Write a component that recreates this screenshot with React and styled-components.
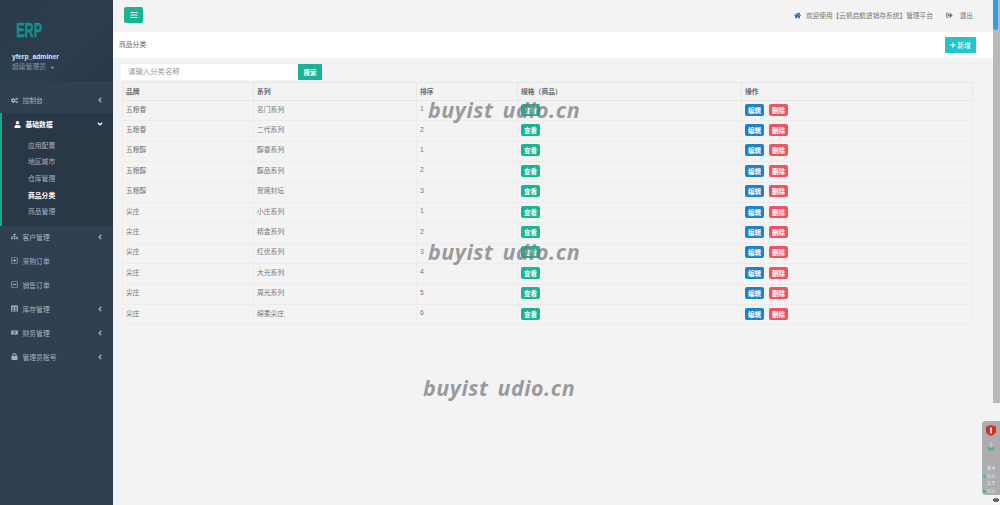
import React from 'react';
import styled, { createGlobalStyle } from 'styled-components';
import {
  FaBars, FaHome, FaSignOutAlt, FaPlus, FaCogs, FaUser, FaSitemap, FaRegPlusSquare,
  FaRegMinusSquare, FaTable, FaMoneyBillAlt, FaLock, FaAngleLeft, FaAngleDown, FaCaretDown, FaEye,
} from 'react-icons/fa';

const GlobalStyle = createGlobalStyle`
  html, body { margin: 0; padding: 0; height: 100%; overflow: hidden; background: #f3f3f4; }
  #root { height: 100%; }
  * { box-sizing: border-box; }
`;

const rows = [
  ['五粮春', '名门系列', 1],
  ['五粮春', '二代系列', 2],
  ['五粮醇', '醇香系列', 1],
  ['五粮醇', '醇品系列', 2],
  ['五粮醇', '贺席封坛', 3],
  ['尖庄', '小庄系列', 1],
  ['尖庄', '精金系列', 2],
  ['尖庄', '红优系列', 3],
  ['尖庄', '大光系列', 4],
  ['尖庄', '周光系列', 5],
  ['尖庄', '绵柔尖庄', 6],
];

const subMenu = ['应用配置', '地区城市', '仓库管理', '商品分类', '商品管理'];

const menuAfter = [
  { icon: <FaSitemap />, label: '客户管理', arrow: true },
  { icon: <FaRegPlusSquare />, label: '采购订单' },
  { icon: <FaRegMinusSquare />, label: '销售订单' },
  { icon: <FaTable />, label: '库存管理', arrow: true },
  { icon: <FaMoneyBillAlt />, label: '财务管理', arrow: true },
  { icon: <FaLock />, label: '管理员账号', arrow: true },
];

export default function App() {
  return (
    <Page>
      <GlobalStyle />
      <Sidebar>
        <Profile>
          <Logo>ERP</Logo>
          <UserName>yferp_adminer</UserName>
          <UserRole>超级管理员 <FaCaretDown size={7} /></UserRole>
        </Profile>
        <Menu>
          <MenuItem>
            <MenuIcon><FaCogs /></MenuIcon>
            <span>控制台</span>
            <MenuArrow><FaAngleLeft /></MenuArrow>
          </MenuItem>
          <ActiveGroup>
            <ActiveItem>
              <MenuIcon><FaUser /></MenuIcon>
              <span>基础数据</span>
              <MenuArrow><FaAngleDown /></MenuArrow>
            </ActiveItem>
            {subMenu.map((name) => (
              <SubItem key={name} $current={name === '商品分类'}>{name}</SubItem>
            ))}
          </ActiveGroup>
          {menuAfter.map((item) => (
            <MenuItem key={item.label}>
              <MenuIcon>{item.icon}</MenuIcon>
              <span>{item.label}</span>
              {item.arrow && <MenuArrow><FaAngleLeft /></MenuArrow>}
            </MenuItem>
          ))}
        </Menu>
      </Sidebar>

      <Main>
        <TopBar>
          <ToggleButton><FaBars /></ToggleButton>
          <TopRight>
            <HomeIcon><FaHome /></HomeIcon>
            <span>欢迎使用【云帆启航进销存系统】管理平台</span>
            <LogoutLink><FaSignOutAlt /> <span>退出</span></LogoutLink>
          </TopRight>
        </TopBar>

        <TitleBar>
          <TitleText>商品分类</TitleText>
          <AddButton><FaPlus size={6} /> 新增</AddButton>
        </TitleBar>

        <Content>
          <SearchRow>
            <SearchInput placeholder="请输入分类名称" />
            <SearchButton>搜索</SearchButton>
          </SearchRow>
          <Table>
            <colgroup>
              <col style={{ width: 131 }} />
              <col style={{ width: 163 }} />
              <col style={{ width: 101 }} />
              <col style={{ width: 224 }} />
              <col style={{ width: 231 }} />
            </colgroup>
            <thead>
              <tr>
                <Th>品牌</Th>
                <Th>系列</Th>
                <Th>排序</Th>
                <Th>规格（商品）</Th>
                <Th>操作</Th>
              </tr>
            </thead>
            <tbody>
              {rows.map((row) => (
                <tr key={row[1]}>
                  <Td>{row[0]}</Td>
                  <Td>{row[1]}</Td>
                  <Td>{row[2]}</Td>
                  <ButtonCell><SmallButton $color="#1ab394">查看</SmallButton></ButtonCell>
                  <ButtonCell>
                    <SmallButton $color="#1c84c6">编辑</SmallButton>
                    <SmallButton $color="#ed5565">删除</SmallButton>
                  </ButtonCell>
                </tr>
              ))}
            </tbody>
          </Table>
        </Content>
      </Main>

      <Watermark $x={428} $y={96}>buyist udio.cn</Watermark>
      <Watermark $x={428} $y={238}>buyist udio.cn</Watermark>
      <Watermark $x={423} $y={374}>buyist udio.cn</Watermark>

      <ScrollTrack><ScrollThumb /></ScrollTrack>

      <FloatWidget>
        <svg width="10" height="11" viewBox="0 0 10 11">
          <path d="M5 0 L10 1.500 V6 C10 8.500 7 10 5 11 C3 10 0 8.500 0 6 V1.500 Z" fill="#cf3029" />
          <rect x="4.200" y="2.500" width="1.600" height="6" fill="#fff" />
        </svg>
        <MicIcon width="8" height="10" viewBox="0 0 8 10">
          <rect x="2.500" y="0" width="3" height="5" rx="1.500" fill="#c2c2c4" />
          <path d="M0.500 5 A3.500 3.500 0 0 0 7.500 5 L5.500 5 A1.500 1.500 0 0 1 2.500 5 Z" fill="#4fae7b" />
        </MicIcon>
        <Speed>
          <span>8.4</span>
          <SpeedUnit $dot="#3b9fd1">K/s</SpeedUnit>
          <span>2.7</span>
          <SpeedUnit $dot="#2fae7a">K/s</SpeedUnit>
        </Speed>
      </FloatWidget>
      <EyeDot><FaEye /></EyeDot>
    </Page>
  );
}

const Page = styled.div`
  display: flex;
  height: 505px;
  width: 1000px;
  position: relative;
  overflow: hidden;
  font-family: "Liberation Sans", "Noto Sans CJK SC", sans-serif;
  font-size: 6.800px;
  color: #676a6c;
`;

const Sidebar = styled.nav`
  width: 113px;
  flex: none;
  background: #2f4050;
`;

const Profile = styled.div`
  height: 81px;
  padding: 19px 12px 0;
  background: linear-gradient(135deg, #2a3a49 0%, #2c3d4d 55%, #27374a 100%);
`;

const Logo = styled.div`
  font-size: 21px;
  line-height: 22px;
  height: 33px;
  padding-left: 7px;
  font-weight: 700;
  color: #14908f;
  -webkit-text-stroke: 0.6px #14908f;
  transform: scaleX(0.6);
  transform-origin: left top;
`;

const UserName = styled.div`
  font-size: 6.800px;
  line-height: 10px;
  font-weight: 700;
  color: #dfe4ed;
`;

const UserRole = styled.div`
  line-height: 10px;
  color: #8095a8;
  display: flex;
  align-items: center;
  gap: 3px;
`;

const Menu = styled.div`
  padding-top: 8px;
`;

const MenuItem = styled.div`
  height: 24px;
  display: flex;
  align-items: center;
  padding: 0 0 2px 11px;
  color: #a7b1c2;
`;

const MenuIcon = styled.span`
  margin-right: 4.500px;
  display: inline-flex;
  font-size: 7px;
`;

const MenuArrow = styled.span`
  margin-left: auto;
  margin-right: 9px;
  display: inline-flex;
  font-size: 8px;
`;

const ActiveGroup = styled.div`
  background: #293846;
  border-left: 2px solid #19aa8d;
  padding-bottom: 5px;
`;

const ActiveItem = styled(MenuItem)`
  height: 24.500px;
  padding-left: 12px;
  font-weight: 700;
  color: #fff;
`;

const SubItem = styled.div`
  height: 16.700px;
  line-height: 16.700px;
  padding-left: 26px;
  font-weight: ${(p) => (p.$current ? 700 : 400)};
  color: ${(p) => (p.$current ? '#ffffff' : '#a7b1c2')};
`;

const Main = styled.main`
  flex: 1;
  min-width: 0;
  display: flex;
  flex-direction: column;
`;

const TopBar = styled.header`
  height: 32px;
  flex: none;
  display: flex;
  align-items: center;
  justify-content: space-between;
  padding: 0 27px 2px 11px;
  background: #f3f3f4;
`;

const ToggleButton = styled.button`
  width: 19px;
  height: 16px;
  padding: 0;
  border: 0;
  border-radius: 2px;
  background: #1ab394;
  color: #fff;
  display: flex;
  align-items: center;
  justify-content: center;
  font-size: 8px;
`;

const TopRight = styled.div`
  display: flex;
  align-items: center;
  font-size: 6.700px;
  color: #777;
`;

const HomeIcon = styled.span`
  color: #2a5a8a;
  display: inline-flex;
  margin-right: 5px;
  font-size: 7px;
`;

const LogoutLink = styled.span`
  margin-left: 13px;
  display: inline-flex;
  align-items: center;
  gap: 7px;
`;

const TitleBar = styled.div`
  height: 26px;
  flex: none;
  background: #fff;
  margin-right: 7px;
  display: flex;
  align-items: center;
  justify-content: space-between;
  padding: 0 17px 0 6px;
  color: #666;
`;

const TitleText = styled.span`
  padding-bottom: 3px;
`;

const AddButton = styled.button`
  width: 31px;
  height: 16px;
  padding: 0;
  border: 0;
  border-radius: 1px;
  background: #23c6c8;
  color: #fff;
  font: inherit;
  display: flex;
  align-items: center;
  justify-content: center;
  gap: 1px;
`;

const Content = styled.div`
  flex: 1;
  padding: 6px 0 0 8px;
`;

const SearchRow = styled.div`
  display: flex;
  height: 16px;
  margin-bottom: 2px;
`;

const SearchInput = styled.input`
  width: 177px;
  height: 16px;
  border: 0;
  padding: 0 7px 2px;
  background: #fff;
  font: inherit;
  font-size: 7.400px;
  outline: none;

  &::placeholder {
    color: #999;
  }
`;

const SearchButton = styled.button`
  width: 24px;
  height: 16px;
  padding: 0;
  border: 0;
  background: #1ab394;
  color: #fff;
  font: inherit;
  font-size: 6.500px;
  font-weight: 700;
`;

const Table = styled.table`
  width: 850px;
  margin-left: 1px;
  table-layout: fixed;
  border-collapse: collapse;
  border: 1px solid #e7e7e7;
`;

const Th = styled.th`
  height: 18px;
  padding: 0 3px 2px;
  text-align: left;
  font-size: 6.800px;
  font-weight: 600;
  color: #676a6c;
  border: 1px solid #e7e7e7;
`;

const Td = styled.td`
  height: 20.400px;
  padding: 0 3px 4px;
  font-size: 6.800px;
  color: #777;
  border: 1px solid #ececec;
`;

const ButtonCell = styled(Td)`
  padding-bottom: 2px;
`;

const SmallButton = styled.span`
  display: inline-flex;
  align-items: center;
  justify-content: center;
  width: 19px;
  height: 12px;
  margin-right: 5px;
  border-radius: 2px;
  background: ${(p) => p.$color};
  color: #fff;
  font-size: 6.500px;
  font-weight: 700;
  vertical-align: middle;
`;

const Watermark = styled.div`
  position: absolute;
  left: ${(p) => p.$x}px;
  top: ${(p) => p.$y}px;
  font-family: "Open Sans", sans-serif;
  font-size: 21.500px;
  line-height: 28px;
  font-weight: 700;
  font-style: italic;
  letter-spacing: 0.5px;
  word-spacing: 3px;
  color: rgba(120, 120, 122, 0.72);
  white-space: nowrap;
  pointer-events: none;
`;

const ScrollTrack = styled.div`
  position: absolute;
  left: 993px;
  right: 0;
  top: 0;
  height: 403px;
  background: #b9b9bb;
`;

const ScrollThumb = styled.div`
  width: 5px;
  height: 30px;
  border-radius: 0 0 3px 3px;
  background: #2f9fe8;
`;

const FloatWidget = styled.div`
  position: absolute;
  right: 0;
  top: 421px;
  width: 18px;
  height: 74px;
  border-radius: 4px 0 0 4px;
  background: #adadb0;
  display: flex;
  flex-direction: column;
  align-items: center;
  padding: 4px 0 0;
`;

const MicIcon = styled.svg`
  margin-top: 6px;
`;

const Speed = styled.div`
  margin-top: 13px;
  display: flex;
  flex-direction: column;
  align-items: center;
  font-size: 5.500px;
  line-height: 7.500px;
  color: #f2f2f2;
`;

const SpeedUnit = styled.span`
  opacity: 0.7;
  position: relative;

  &::before {
    content: '';
    position: absolute;
    left: -4px;
    top: 2.500px;
    width: 3px;
    height: 3px;
    border-radius: 50%;
    background: ${(p) => p.$dot};
  }
`;

const EyeDot = styled.span`
  position: absolute;
  left: 993px;
  top: 497px;
  display: inline-flex;
  font-size: 6px;
  color: #222;
`;
